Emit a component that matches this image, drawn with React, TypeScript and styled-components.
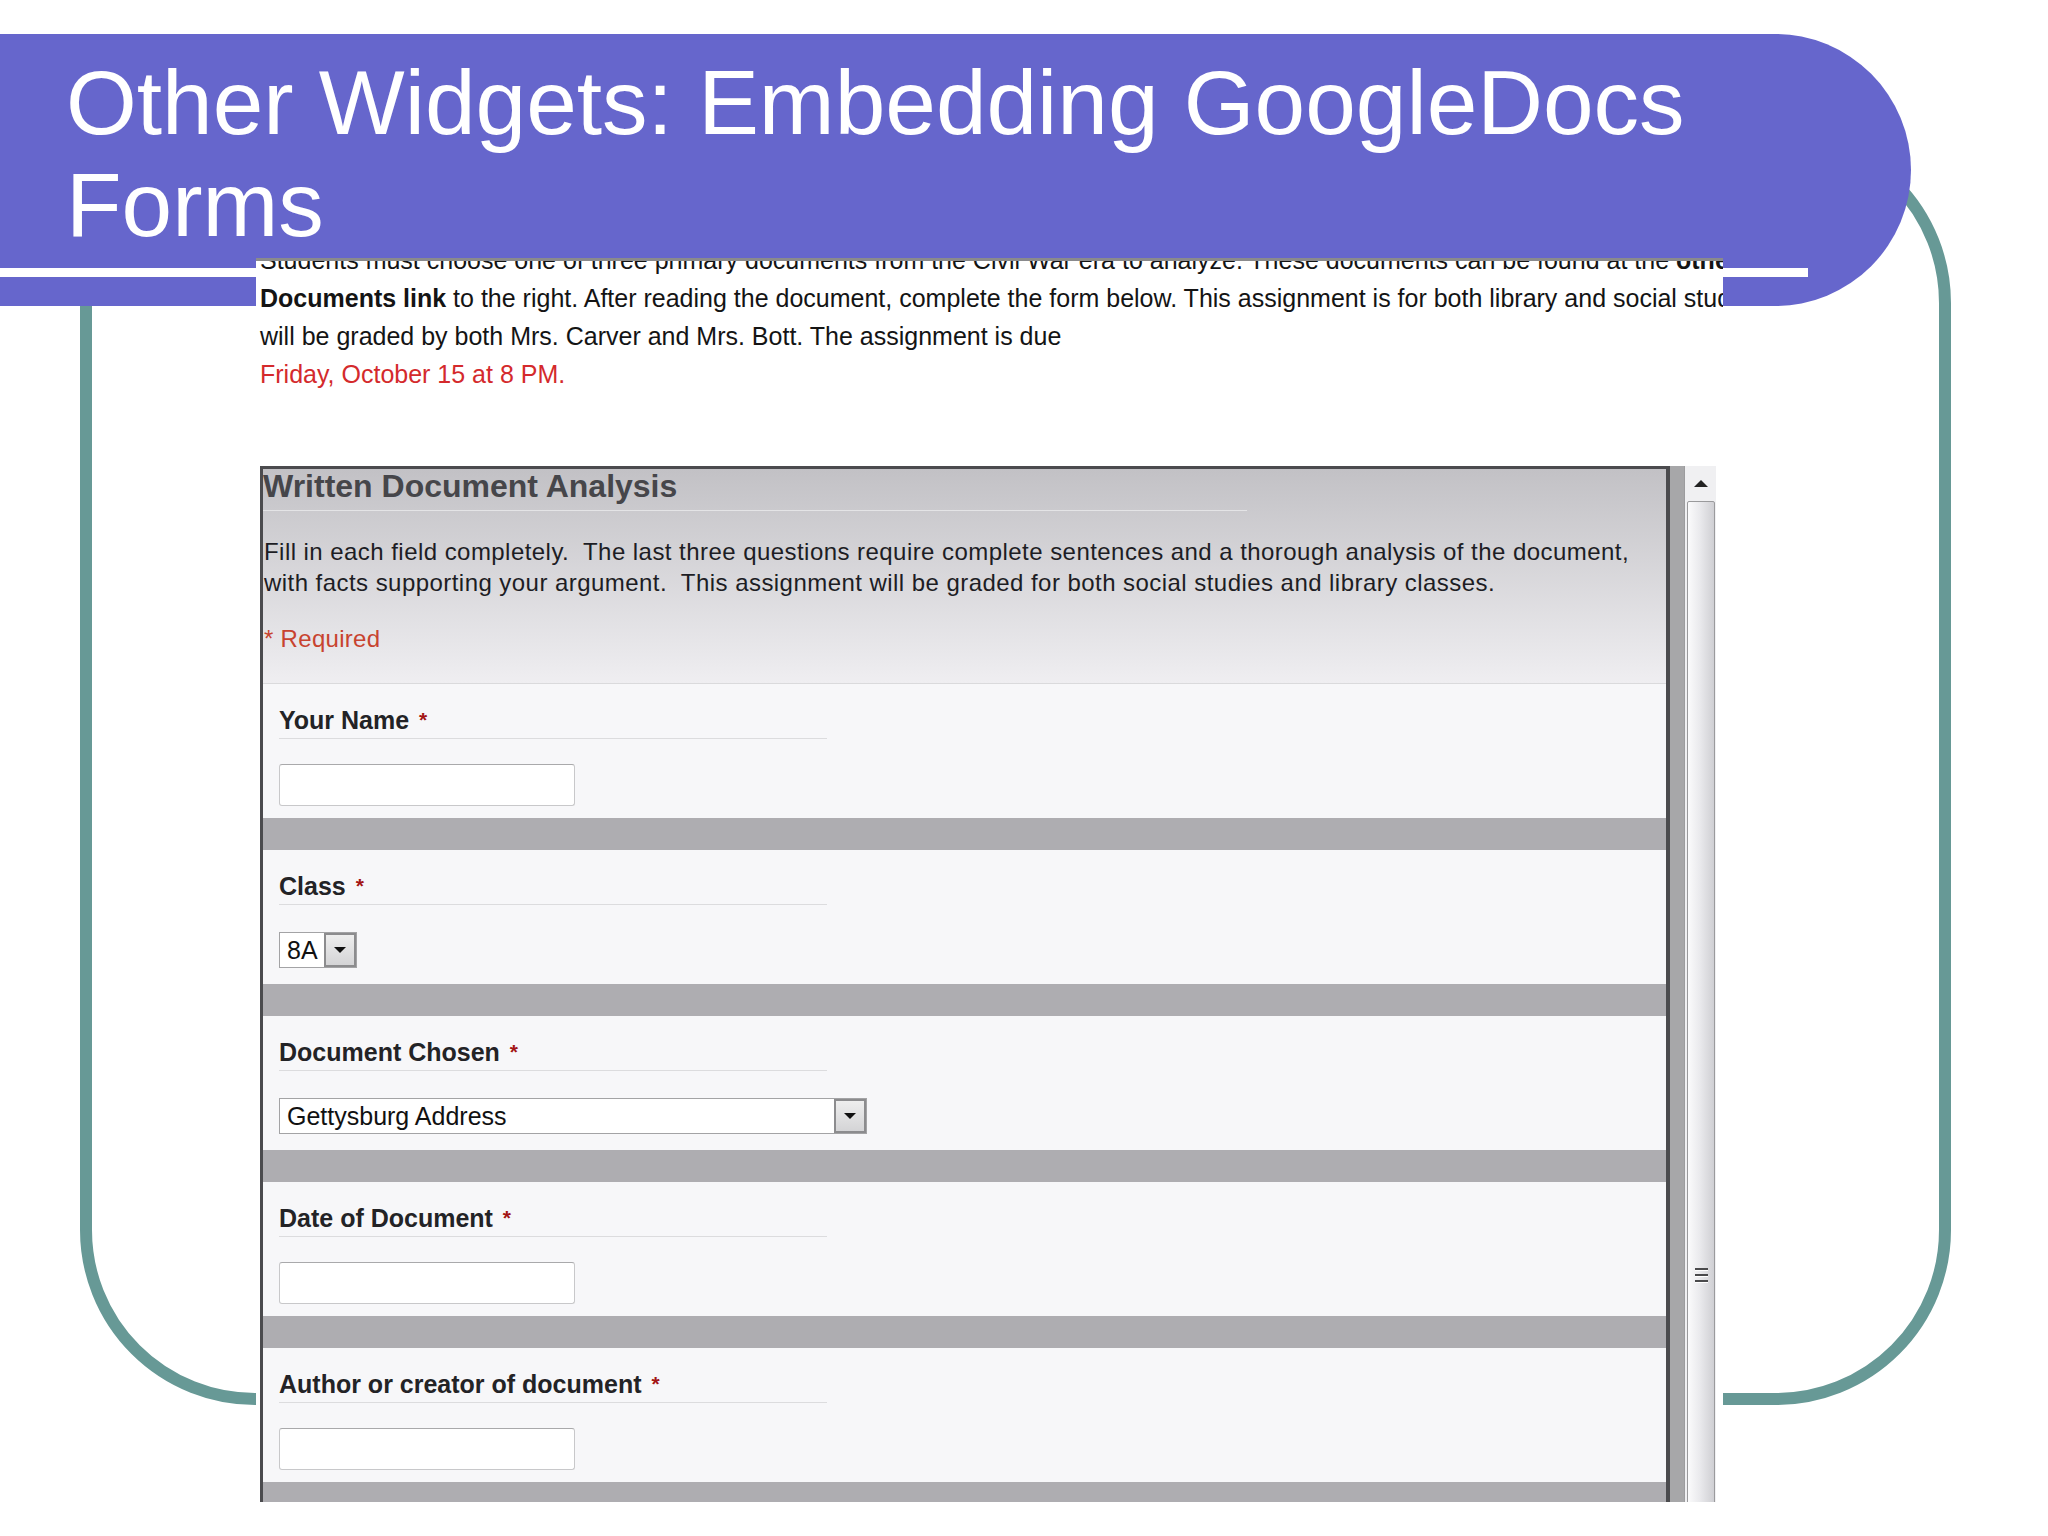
import React from "react";
import styled, { createGlobalStyle } from "styled-components";

///--------------------------------------------------------------------
const GlobalStyle = createGlobalStyle`
  html, body {
    margin: 0;
    padding: 0;
    background: #fff;
  }
  body {
    font-family: "Liberation Sans", Arial, sans-serif;
  }
`;

const Slide = styled.div`
  position: relative;
  width: 2048px;
  height: 1536px;
  overflow: hidden;
  background: #fff;
`;

const TealFrame = styled.div`
  position: absolute;
  left: 80px;
  top: 128px;
  width: 1871px;
  height: 1277px;
  box-sizing: border-box;
  border: 12px solid #679996;
  border-radius: 175px;
`;

const TitleBar = styled.div`
  position: absolute;
  left: 0;
  top: 34px;
  width: 1911px;
  height: 272px;
  display: flex;
  flex-direction: column;
  background: #6666cc;
  border-radius: 0 136px 136px 0;
`;

const TitleText = styled.h1`
  margin: 0;
  padding: 18px 60px 0 66px;
  font-family: "Liberation Sans", Arial, sans-serif;
  font-weight: normal;
  font-size: 91px;
  line-height: 102px;
  color: #fff;
`;

const TitleRule = styled.div`
  width: 1808px;
  height: 9px;
  margin-top: auto;
  margin-bottom: 29px;
  background: #fff;
`;

const Picture = styled.div`
  position: absolute;
  left: 256px;
  top: 258px;
  width: 1467px;
  height: 1244px;
  box-sizing: border-box;
  display: flex;
  flex-direction: column;
  overflow: hidden;
  background: #fff;
  border-top: 3px solid #8a8a8c;
`;

const Intro = styled.div`
  margin: -20px 0 0 4px;
  font-size: 25px;
  line-height: 38px;
  color: #141414;
`;

const IntroLine = styled.div<{ $red?: boolean }>`
  white-space: nowrap;
  color: ${(p) => (p.$red ? "#d42a2c" : "#141414")};
`;

const Strong = styled.b`
  font-weight: bold;
`;

////---------------------------------------------------------------
const FormWindow = styled.div`
  display: flex;
  flex: 1;
  min-height: 0;
  width: 1456px;
  margin: 73px 0 0 4px;
`;

const FormPane = styled.div`
  flex: 1;
  min-width: 0;
  overflow: hidden;
  border: 3px solid #4b4b4e;
  border-right-width: 4px;
  border-bottom: 0;
  background: #aeadb1;
`;

const FormHeader = styled.div`
  padding-bottom: 29px;
  border-bottom: 1px solid #dadadc;
  background: linear-gradient(#c2c1c5, #efeef1);
`;

const FormTitle = styled.h2`
  width: 984px;
  margin: 0;
  padding-bottom: 7px;
  border-bottom: 1px solid #e4e4e6;
  font-size: 32px;
  line-height: 34px;
  font-weight: bold;
  color: #46464a;
`;

const FormDesc = styled.p`
  margin: 25px 0 0 1px;
  font-size: 24px;
  line-height: 31px;
  letter-spacing: 0.45px;
  color: #1d1d24;
  white-space: nowrap;
`;

const RequiredNote = styled.p`
  margin: 25px 0 0 1px;
  font-size: 24px;
  line-height: 31px;
  letter-spacing: 0.3px;
  color: #c8432f;
`;

const Question = styled.div`
  height: 134px;
  box-sizing: border-box;
  padding: 21px 0 0 16px;
  margin-bottom: 32px;
  background: #f7f7f9;
`;

const QuestionLabel = styled.div`
  width: 548px;
  padding-bottom: 3px;
  border-bottom: 1px solid #dcdcde;
  font-size: 25px;
  line-height: 30px;
  font-weight: bold;
  color: #232326;
`;

const Star = styled.span`
  margin-left: 3px;
  font-size: 21px;
  vertical-align: 2px;
  color: #a31515;
`;

const TextBox = styled.input`
  display: block;
  width: 296px;
  height: 42px;
  margin: 25px 0 0;
  box-sizing: border-box;
  border: 1px solid #c8c8ca;
  border-top-color: #a9a9ab;
  border-radius: 3px;
  background: #fff;
  outline: none;
`;

const SelectBox = styled.div<{ $width: number }>`
  display: flex;
  width: ${(p) => p.$width}px;
  height: 36px;
  margin-top: 27px;
  box-sizing: border-box;
  border: 1px solid #a3a3a5;
  background: #fff;
`;

const SelectValue = styled.span`
  flex: 1;
  padding-left: 7px;
  font-size: 25px;
  line-height: 34px;
  color: #111;
`;

const SelectButton = styled.span`
  width: 32px;
  display: flex;
  align-items: center;
  justify-content: center;
  box-sizing: border-box;
  border: 2px solid #8c8c8e;
  background: linear-gradient(#eeeeee, #d4d4d6);
`;

const DownArrow = styled.span`
  width: 0;
  height: 0;
  border-left: 6px solid transparent;
  border-right: 6px solid transparent;
  border-top: 6px solid #111;
`;

const Gutter = styled.div`
  width: 14px;
  background: #a7a7a9;
`;

const Scrollbar = styled.div`
  width: 32px;
  box-sizing: border-box;
  display: flex;
  flex-direction: column;
  border-left: 1px solid #9c9c9e;
  background: #f0f0f2;
`;

const ScrollArrow = styled.div`
  height: 35px;
  flex-shrink: 0;
  display: flex;
  align-items: center;
  justify-content: center;
`;

const UpTriangle = styled.span`
  width: 0;
  height: 0;
  border-left: 7px solid transparent;
  border-right: 7px solid transparent;
  border-bottom: 7px solid #222;
`;

const Thumb = styled.div`
  height: 1548px;
  flex-shrink: 0;
  margin: 0 1px 0 2px;
  box-sizing: border-box;
  display: flex;
  flex-direction: column;
  align-items: center;
  justify-content: center;
  gap: 3px;
  border: 1px solid #9a9a9c;
  border-radius: 2px;
  background: linear-gradient(90deg, #fbfbfc, #eaeaed 45%, #cfcfd3);
`;

const GripLine = styled.span`
  width: 13px;
  height: 2px;
  background: #4a4a4c;
  border-bottom: 1px solid #fff;
`;

////---------------------------------------------------------------
interface Field {
  label: string;
  kind: "text" | "select";
  value?: string;
  width?: number;
}

const fields: Field[] = [
  { label: "Your Name", kind: "text" },
  { label: "Class", kind: "select", value: "8A", width: 78 },
  { label: "Document Chosen", kind: "select", value: "Gettysburg Address", width: 588 },
  { label: "Date of Document", kind: "text" },
  { label: "Author or creator of document", kind: "text" },
  { label: "Brief summary of document", kind: "text" },
];

const FieldBlock = ({ field }: { field: Field }) => (
  <Question>
    <QuestionLabel>
      {field.label} <Star>*</Star>
    </QuestionLabel>
    {field.kind === "text" ? (
      <TextBox type="text" readOnly />
    ) : (
      <SelectBox $width={field.width || 200}>
        <SelectValue>{field.value}</SelectValue>
        <SelectButton>
          <DownArrow />
        </SelectButton>
      </SelectBox>
    )}
  </Question>
);

export default function App() {
  return (
    <>
      <GlobalStyle />
      <Slide>
        <TealFrame />
        <TitleBar>
          <TitleText>Other Widgets: Embedding GoogleDocs Forms</TitleText>
          <TitleRule />
        </TitleBar>
        <Picture>
          <Intro>
            <IntroLine>
              Students must choose one of three primary documents from the Civil War era to analyze. These
              documents can be found at the <Strong>other</Strong>
            </IntroLine>
            <IntroLine>
              <Strong>Documents link</Strong> to the right. After reading the document, complete the form
              below. This assignment is for both library and social studies. It
            </IntroLine>
            <IntroLine>will be graded by both Mrs. Carver and Mrs. Bott. The assignment is due</IntroLine>
            <IntroLine $red>Friday, October 15 at 8 PM.</IntroLine>
          </Intro>
          <FormWindow>
            <FormPane>
              <FormHeader>
                <FormTitle>Written Document Analysis</FormTitle>
                <FormDesc>
                  Fill in each field completely.{"\u00a0"} The last three questions require complete sentences
                  and a thorough analysis of the document,
                  <br />
                  with facts supporting your argument.{"\u00a0"} This assignment will be graded for both social
                  studies and library classes.
                </FormDesc>
                <RequiredNote>* Required</RequiredNote>
              </FormHeader>
              {fields.map((f) => (
                <FieldBlock key={f.label} field={f} />
              ))}
            </FormPane>
            <Gutter />
            <Scrollbar>
              <ScrollArrow>
                <UpTriangle />
              </ScrollArrow>
              <Thumb>
                <GripLine />
                <GripLine />
                <GripLine />
              </Thumb>
            </Scrollbar>
          </FormWindow>
        </Picture>
      </Slide>
    </>
  );
}
